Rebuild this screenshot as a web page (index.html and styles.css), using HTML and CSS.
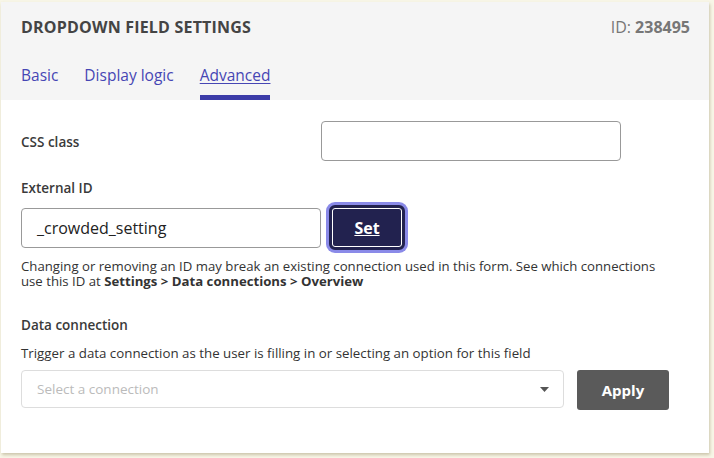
FILE: index.html
```html
<!DOCTYPE html>
<html>
<head>
<meta charset="utf-8">
<link rel="stylesheet" href="styles.css">
</head>
<body>
<div class="panel">
  <div class="head">
    <div class="title-row">
      <div class="title">DROPDOWN FIELD SETTINGS</div>
      <div class="id">ID: <b>238495</b></div>
    </div>
    <div class="tabs">
      <a class="tab">Basic</a>
      <a class="tab">Display logic</a>
      <a class="tab active">Advanced</a>
    </div>
  </div>
  <div class="body">
    <div class="css-row">
      <label class="label">CSS class</label>
      <div class="input wide"></div>
    </div>
    <div class="label ext">External ID</div>
    <div class="ext-row">
      <div class="input">_crowded_setting</div>
      <button class="set">Set</button>
    </div>
    <p class="help">Changing or removing an ID may break an existing connection used in this form. See which connections use this ID at <b>Settings &gt; Data connections &gt; Overview</b></p>
    <div class="label dc">Data connection</div>
    <p class="desc">Trigger a data connection as the user is filling in or selecting an option for this field</p>
    <div class="dc-row">
      <div class="select"><span>Select a connection</span><svg width="9" height="5" viewBox="0 0 9 5"><path d="M0 0h9L4.5 5z" fill="#555"/></svg></div>
      <button class="apply">Apply</button>
    </div>
  </div>
</div>
</body>
</html>
```
FILE: styles.css
```css
html, body { margin: 0; padding: 0; }
body {
  background: #f8f6e7;
  font-family: "Open Sans", "Noto Sans", sans-serif;
  color: #333;
  width: 714px;
  height: 458px;
  overflow: hidden;
}
.panel {
  margin: 2px 0 0 1px;
  width: 708px;
  height: 451px;
  background: #fff;
  box-shadow: 1px 2px 3px rgba(120, 110, 60, 0.35);
}
.head {
  background: #f5f5f5;
  padding: 0 19px 0 20px;
  height: 98px;
  box-sizing: border-box;
}
.title-row {
  display: flex;
  justify-content: space-between;
  align-items: center;
  height: 50px;
}
.title {
  font-weight: 700;
  font-size: 16px;
  letter-spacing: 0.2px;
  color: #444;
}
.id {
  font-size: 16px;
  color: #777;
}
.id b { font-weight: 700; }
.tabs {
  display: flex;
  gap: 26px;
  height: 48px;
}
.tab {
  font-size: 15.5px;
  color: #4646b4;
  padding-top: 12px;
  box-sizing: border-box;
  height: 48px;
}
.tab.active {
  text-decoration: underline;
  text-decoration-thickness: 1px;
  text-underline-offset: 2px;
  border-bottom: 5px solid #3c3ca8;
}
.body {
  padding: 0 20px;
}
.css-row {
  display: flex;
  align-items: center;
  justify-content: space-between;
  width: 600px;
  margin-top: 21px;
}
.css-row .label { padding-top: 2px; }
.label {
  font-size: 13.5px;
  line-height: 20px;
  font-weight: 600;
  color: #3a3a3a;
}
.input {
  box-sizing: border-box;
  width: 300px;
  height: 40px;
  border: 1px solid #999;
  border-radius: 4px;
  font-size: 16px;
  color: #222;
  padding: 0 15px;
  display: flex;
  align-items: center;
}
.ext { margin-top: 17px; }
.ext-row {
  display: flex;
  align-items: center;
  gap: 8px;
  margin-top: 7px;
}
.set {
  box-sizing: border-box;
  width: 76px;
  height: 45px;
  background: #22224f;
  color: #fff;
  border: 3px solid #22224f;
  border-radius: 6px;
  outline: none;
  font-family: inherit;
  font-weight: 700;
  font-size: 16px;
  text-decoration: underline;
  box-shadow: 0 0 0 1px #fff inset, 0 0 0 3px #8a8ae8;
}
.help {
  margin: 9px 0 0;
  max-width: 655px;
  font-size: 13.2px;
  line-height: 15px;
  color: #333;
}
.help b { font-weight: 700; }
.dc { margin-top: 26px; }
.desc {
  margin: 9px 0 0;
  font-size: 13.3px;
  color: #333;
}
.dc-row {
  display: flex;
  align-items: flex-start;
  gap: 13px;
  margin-top: 8px;
}
.select {
  box-sizing: border-box;
  width: 543px;
  height: 38px;
  border: 1px solid #ddd;
  border-radius: 4px;
  display: flex;
  align-items: center;
  justify-content: space-between;
  padding: 0 14px 0 15px;
  font-size: 13.5px;
  color: #bbb;
}
.apply {
  width: 92px;
  height: 40px;
  background: #5a5a5a;
  color: #fff;
  border: none;
  border-radius: 3px;
  font-family: inherit;
  font-weight: 700;
  font-size: 15px;
}
```
